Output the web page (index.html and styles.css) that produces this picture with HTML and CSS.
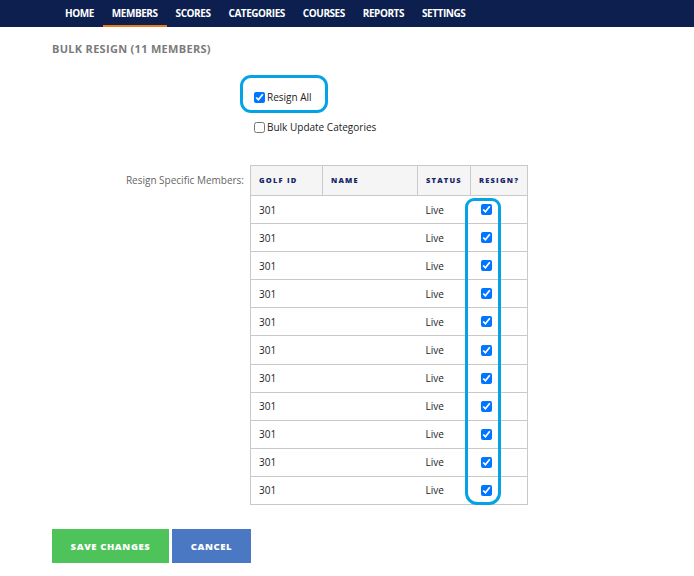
FILE: index.html
```html
<!DOCTYPE html>
<html>
<head>
<meta charset="utf-8">
<link rel="stylesheet" href="styles.css">
</head>
<body>
<nav class="topnav">
  <a class="nav-item">HOME</a>
  <a class="nav-item active">MEMBERS</a>
  <a class="nav-item">SCORES</a>
  <a class="nav-item">CATEGORIES</a>
  <a class="nav-item">COURSES</a>
  <a class="nav-item">REPORTS</a>
  <a class="nav-item">SETTINGS</a>
</nav>
<main class="content">
  <h1 class="title">BULK RESIGN (11 MEMBERS)</h1>
  <div class="form">
    <div class="row opt first">
      <div class="label"></div>
      <label class="check"><input type="checkbox" checked> Resign All</label>
    </div>
    <div class="row opt second">
      <div class="label"></div>
      <label class="check"><input type="checkbox"> Bulk Update Categories</label>
    </div>
    <div class="row table-row">
      <div class="label lbl-table">Resign Specific Members:</div>
      <table class="members">
        <colgroup><col class="c1"><col class="c2"><col class="c3"><col class="c4"></colgroup>
        <thead>
          <tr><th>GOLF ID</th><th>NAME</th><th>STATUS</th><th>RESIGN?</th></tr>
        </thead>
        <tbody>
          <tr><td>301</td><td></td><td>Live</td><td><input type="checkbox" checked></td></tr>
          <tr><td>301</td><td></td><td>Live</td><td><input type="checkbox" checked></td></tr>
          <tr><td>301</td><td></td><td>Live</td><td><input type="checkbox" checked></td></tr>
          <tr><td>301</td><td></td><td>Live</td><td><input type="checkbox" checked></td></tr>
          <tr><td>301</td><td></td><td>Live</td><td><input type="checkbox" checked></td></tr>
          <tr><td>301</td><td></td><td>Live</td><td><input type="checkbox" checked></td></tr>
          <tr><td>301</td><td></td><td>Live</td><td><input type="checkbox" checked></td></tr>
          <tr><td>301</td><td></td><td>Live</td><td><input type="checkbox" checked></td></tr>
          <tr><td>301</td><td></td><td>Live</td><td><input type="checkbox" checked></td></tr>
          <tr><td>301</td><td></td><td>Live</td><td><input type="checkbox" checked></td></tr>
          <tr><td>301</td><td></td><td>Live</td><td><input type="checkbox" checked></td></tr>
        </tbody>
      </table>
    </div>
  </div>
  <div class="actions">
    <button class="btn btn-save">SAVE CHANGES</button>
    <button class="btn btn-cancel">CANCEL</button>
  </div>
</main>
<div class="mark mark-all"></div>
<div class="mark mark-col"></div>
</body>
</html>
```

FILE: styles.css
```css
html, body {
  margin: 0;
  padding: 0;
  background: #ffffff;
  font-family: "Open Sans", "Noto Sans", sans-serif;
}
body { position: relative; width: 694px; height: 576px; overflow: hidden; }

.topnav {
  display: flex;
  height: 27px;
  background: #0c1f4e;
  padding-left: 56px;
  box-sizing: border-box;
}
.nav-item {
  display: flex;
  align-items: center;
  padding: 0 9px 2px;
  color: #ffffff;
  font-size: 10px;
  font-weight: 700;
  letter-spacing: -0.45px;
  box-sizing: border-box;
  height: 27px;
}
.nav-item.active { border-bottom: 2px solid #e57c22; padding-bottom: 0; }

.content { padding: 0 0 0 52px; }
.title {
  margin: 15px 0 0;
  font-size: 11px;
  font-weight: 700;
  color: #7b7b7b;
  letter-spacing: 0.3px;
  line-height: 14px;
}
.form { margin-top: 33px; }
.row { display: flex; gap: 6px; }
.label { width: 192px; flex: none; text-align: right; font-size: 10px; color: #666; }
.check {
  display: flex;
  align-items: center;
  font-size: 10px;
  color: #222;
  height: 16px;
}
.check input { width: 11px; height: 11px; margin: 0 2px 0 4px; }
.opt.second { margin-top: 14px; }
.table-row { margin-top: 30px; }
.lbl-table { padding-top: 8px; line-height: 14px; }

.members {
  border-collapse: collapse;
  width: 277px;
  table-layout: fixed;
  font-size: 10px;
  color: #222;
  border: 1px solid #c9c9c9;
}
.c1 { width: 72px; }
.c2 { width: 95px; }
.c3 { width: 53px; }
.c4 { width: 57px; }
.members th, .members td {
  text-align: left;
  padding: 0 0 0 8px;
}
.members th {
  border: 1px solid #c9c9c9;
  background: #f5f5f5;
  height: 27px;
  padding-bottom: 2px;
  font-size: 7.5px;
  font-weight: 800;
  color: #172667;
  letter-spacing: 1.2px;
}
.members td { height: 27.1px; border-top: 1px solid #c9c9c9; }
.members td:last-child { padding-left: 9px; }
.members td input { width: 11px; height: 11px; margin: 3px 0 0 1px; }

.actions { display: flex; gap: 3px; margin-top: 24px; }
.btn {
  border: none;
  height: 34px;
  color: #fff;
  font-family: "Open Sans", sans-serif;
  font-weight: 800;
  font-size: 9.5px;
  letter-spacing: 0.6px;
  padding: 0;
}
.btn-save { background: #4dc35a; width: 117px; }
.btn-cancel { background: #4a78c2; width: 79px; }

.mark {
  position: absolute;
  border: 3px solid #04a3e6;
  box-sizing: border-box;
}
.mark-all { left: 240px; top: 75px; width: 88px; height: 38px; border-radius: 11px; }
.mark-col { left: 465px; top: 198px; width: 36px; height: 307px; border-radius: 9px 9px 12px 12px; }
```
